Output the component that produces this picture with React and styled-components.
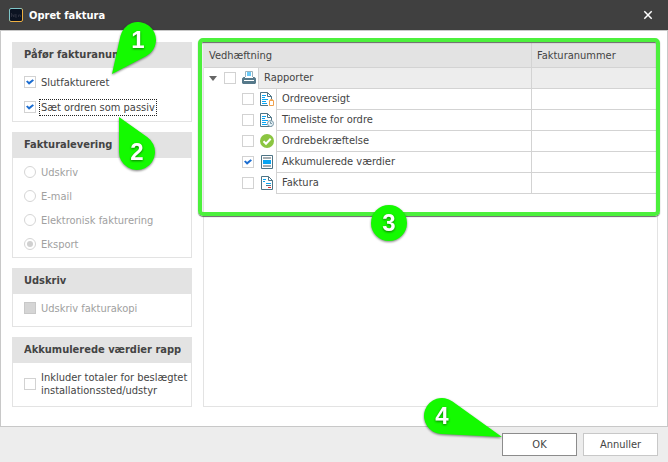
import React from 'react';
import styled, { createGlobalStyle } from 'styled-components';

const reports = [
	{ id: 'overview', name: 'Ordreoversigt', icon: 'lock' },
	{ id: 'timelist', name: 'Timeliste for ordre', icon: 'clock' },
	{ id: 'confirmation', name: 'Ordrebekræftelse', icon: 'approved' },
	{ id: 'accumulated', name: 'Akkumulerede værdier', icon: 'layout', checked: true },
	{ id: 'invoice', name: 'Faktura', icon: 'invoice' },
];

const deliveries = ['Udskriv', 'E-mail', 'Elektronisk fakturering', 'Eksport'];

const App = () => {
	return (
		<Window>
			<GlobalStyle />
			<TitleBar>
				<AppLogo />
				<WindowTitle>Opret faktura</WindowTitle>
				<CloseButton type="button" aria-label="Luk">
					<svg width="10" height="10" viewBox="0 0 10 10" aria-hidden="true">
						<path d="M1.3 1.3 8.7 8.7M8.7 1.3 1.3 8.7" stroke="#fff" strokeWidth="1.5" />
					</svg>
				</CloseButton>
			</TitleBar>
			<Content>
				<Sidebar>
					<Panel>
						<PanelTitle>Påfør fakturanummer</PanelTitle>
						<PanelBody $gap="1px">
							<Option>
								<Checkbox defaultChecked />
								<span>Slutfaktureret</span>
								<Callout number="1" left={96} top={-48} tip={[-26, 34]} />
							</Option>
							<Option>
								<Checkbox defaultChecked />
								<FocusText>Sæt ordren som passiv</FocusText>
								<Callout number="2" left={95} top={39} tip={[-18, -35]} />
							</Option>
						</PanelBody>
					</Panel>
					<Panel>
						<PanelTitle>Fakturalevering</PanelTitle>
						<PanelBody $bottom="1px">
							{deliveries.map((name) => (
								<Option key={name} $disabled>
									<Radio name="delivery" disabled defaultChecked={name === 'Eksport'} />
									<span>{name}</span>
								</Option>
							))}
						</PanelBody>
					</Panel>
					<Panel>
						<PanelTitle>Udskriv</PanelTitle>
						<PanelBody $bottom="6px">
							<Option $disabled>
								<Checkbox disabled />
								<span>Udskriv fakturakopi</span>
							</Option>
						</PanelBody>
					</Panel>
					<Panel>
						<PanelTitle>Akkumulerede værdier rapport</PanelTitle>
						<PanelBody $top="8px" $bottom="9px">
							<Option>
								<Checkbox />
								<span>Inkluder totaler for beslægtet installationssted/udstyr</span>
							</Option>
						</PanelBody>
					</Panel>
				</Sidebar>
				<Attachments>
					<Table>
						<thead>
							<tr>
								<HeadCell>Vedhæftning</HeadCell>
								<HeadCell $narrow>Fakturanummer</HeadCell>
							</tr>
						</thead>
						<tbody>
							<tr>
								<Cell>
									<TreeNode>
										<Expander type="button" aria-label="Fold sammen">
											<svg width="8" height="5" viewBox="0 0 8 5" aria-hidden="true">
												<path d="M0 0h8L4 5z" fill="#666" />
											</svg>
										</Expander>
										<Checkbox id="reports" />
										<PrinterIcon />
										<NodeLabel htmlFor="reports" $group>Rapporter</NodeLabel>
									</TreeNode>
								</Cell>
								<ValueCell $group />
							</tr>
							{reports.map((report) => (
								<tr key={report.id}>
									<Cell>
										<TreeNode $child>
											<Checkbox id={report.id} defaultChecked={report.checked} />
											<ReportIcon kind={report.icon} />
											<NodeLabel htmlFor={report.id}>{report.name}</NodeLabel>
										</TreeNode>
									</Cell>
									<ValueCell />
								</tr>
							))}
						</tbody>
					</Table>
					<Highlight>
						<Callout number="3" left={169} top={163} />
					</Highlight>
				</Attachments>
			</Content>
			<Footer>
				<ButtonSlot>
					<Button type="button" $primary>OK</Button>
					<Callout number="4" left={-78} top={-35} tip={[60, 21]} />
				</ButtonSlot>
				<Button type="button">Annuller</Button>
			</Footer>
		</Window>
	);
};

export default App;

// Callouts

const RADIUS = 18;

// Outline of the bubble: the two tangents from the tip, then the long way round the circle
const bubblePath = ([x, y]) => {
	const angle = Math.atan2(y, x);
	const spread = Math.acos(RADIUS / Math.hypot(x, y));
	const point = (a) => `${RADIUS * Math.cos(a)} ${RADIUS * Math.sin(a)}`;
	return `M${x} ${y}L${point(angle + spread)}A${RADIUS} ${RADIUS} 0 1 1 ${point(angle - spread)}Z`;
};

const Callout = ({ number, left, top, tip }) => (
	<Bubble $left={left} $top={top} viewBox="-18 -18 36 36">
		{tip ? <path d={bubblePath(tip)} fill="#14fa00" /> : <circle r={RADIUS} fill="#14fa00" />}
		<BubbleText y="8" textAnchor="middle">{number}</BubbleText>
	</Bubble>
);

// Icons

const AppLogo = () => (
	<svg width="14" height="14" viewBox="0 0 14 14" aria-hidden="true">
		<defs>
			<linearGradient id="logoEdge" x1="0" y1="0" x2="1" y2="1">
				<stop offset="0.4" stopColor="#7fc6c9" />
				<stop offset="0.6" stopColor="#f0b040" />
			</linearGradient>
		</defs>
		<rect x="0.5" y="0.5" width="13" height="13" rx="1.5" fill="#0c1322" stroke="url(#logoEdge)" />
		<path d="M2.5 5v4M2.5 7h2v2M6 7h2M6 6v3h2M9.500 9V7h2v2" stroke="#2a2e3c" fill="none" />
	</svg>
);

const PrinterIcon = () => (
	<svg width="14" height="14" viewBox="0 0 14 14" aria-hidden="true">
		<path d="M3.500 6V.500h7V6" fill="#fff" stroke="#9db3bd" />
		<path d="M5 1h4v4H5z" fill="#6bcaf8" />
		<path d="M1.500 6H3v1h8V6h1.500L14 7.500V12l-1 1H1l-1-1V7.500z" fill="#56798a" />
		<path d="M2 9.500h10" stroke="#fff" />
	</svg>
);

const ReportIcon = ({ kind }) => {
	if (kind === 'approved') {
		return (
			<svg width="14" height="14" viewBox="0 0 14 14" aria-hidden="true">
				<circle cx="7" cy="7" r="7" fill="#8bc541" />
				<path d="M3.500 7.200 6 9.700 10.700 4.800" fill="none" stroke="#fff" strokeWidth="2" />
			</svg>
		);
	}
	if (kind === 'layout') {
		return (
			<svg width="14" height="14" viewBox="0 0 14 14" aria-hidden="true">
				<path d="M1.500.5h11v13h-11z" fill="#fff" stroke="#4f7586" />
				<path d="M3 2h8v2H3zM3 10h8v2H3z" fill="#a3adb2" />
				<path d="M3 5h8v4H3z" fill="#08a4f2" />
			</svg>
		);
	}
	if (kind === 'invoice') {
		return (
			<svg width="14" height="14" viewBox="0 0 14 14" aria-hidden="true">
				<path d="M1.500.5h7l4 4v9h-11z" fill="#fff" stroke="#4f7586" />
				<path d="M8.500.5v4h4" fill="none" stroke="#4f7586" />
				<path d="M3 3.500h3M3 5.500h2M6 7.500h5" stroke="#08a4f2" />
				<path d="M6 9.500h5" stroke="#4f7586" />
				<path d="M8 11.500h3" stroke="#e8352d" />
			</svg>
		);
	}
	return (
		<svg width="14" height="14" viewBox="0 0 14 14" aria-hidden="true">
			<path d="M.5.5h7l4 4v9H.5z" fill="#fff" stroke="#4f7586" />
			<path d="M7.500.5v4h4" fill="none" stroke="#4f7586" />
			<path d="M2 3.500h4M2 5.500h3M2 7.500h6M2 9.500h4M2 11.500h5" stroke="#08a4f2" />
			{kind === 'lock' ? (
				<>
					<path d="M8 7h6v7H8z" fill="#fff" />
					<path d="M10.500 8.500v-1h2v1" fill="none" stroke="#e8a55f" />
					<path d="M9.500 8.500h4v5h-4z" fill="#fff" stroke="#f0a04b" />
				</>
			) : (
				<>
					<circle cx="10.5" cy="10.5" r="3" fill="#e5f1f6" stroke="#7997a5" />
					<path d="M10.500 8.500v2h1.500" fill="none" stroke="#7997a5" />
				</>
			)}
		</svg>
	);
};

// Styles

const GlobalStyle = createGlobalStyle`
	* {
		box-sizing: border-box;
	}
	body {
		margin: 0;
		color: #444;
		font-family: 'DejaVu Sans Condensed', 'DejaVu Sans', sans-serif;
		font-size: 11px;
		line-height: 13px;
	}
	button {
		font: inherit;
		color: inherit;
	}
`;

const Window = styled.div`
	min-height: 100vh;
	display: flex;
	flex-direction: column;
	background-color: #ededed;
`;

const TitleBar = styled.header`
	height: 30px;
	padding: 0 15px 0 9px;
	display: flex;
	align-items: center;
	gap: 6px;
	background-color: #404040;
`;

const WindowTitle = styled.h1`
	margin: 0;
	flex: 1;
	color: #fff;
	font-size: 11px;
	font-weight: bold;
`;

const CloseButton = styled.button`
	display: flex;
	padding: 0;
	border: 0;
	background: none;
`;

const Content = styled.main`
	flex: 1;
	display: flex;
	gap: 11px;
	padding: 11px 9px 19px 11px;
	border: 1px solid #c8c8c8;
	background-color: #fff;
`;

const Sidebar = styled.div`
	width: 180px;
	display: flex;
	flex-direction: column;
	gap: 10px;
`;

const Panel = styled.section`
	border: 1px solid #e3e3e3;
	border-top: 0;
`;

const PanelTitle = styled.h2`
	height: 26px;
	margin: 0;
	border: solid #e3e3e3;
	border-width: 0 10px 0 11px;
	background-color: #e3e3e3;
	font-size: 11px;
	font-weight: bold;
	line-height: 26px;
	white-space: nowrap;
	overflow: hidden;
`;

const PanelBody = styled.div`
	display: flex;
	flex-direction: column;
	gap: ${(props) => props.$gap || '0'};
	padding: ${(props) => props.$top || '2px'} 0 ${(props) => props.$bottom || '2px'} 11px;
`;

const Option = styled.label`
	position: relative;
	min-height: 24px;
	display: flex;
	align-items: center;
	gap: 5px;
	color: ${(props) => (props.$disabled ? '#a0a0a0' : '#444')};
`;

const FocusText = styled.span`
	outline: 1px dotted #222;
	outline-offset: 1px;
`;

const Checkbox = styled.input.attrs({ type: 'checkbox' })`
	appearance: none;
	flex: none;
	width: 12px;
	height: 12px;
	margin: 0;
	border: 1px solid #d2d2d2;
	background-color: #fff;
	&:disabled {
		border-color: #c8c8c8;
		background-color: #d5d5d5;
	}
	&:checked::before {
		content: '';
		display: block;
		width: 8px;
		height: 6px;
		margin: 2px 1px;
		background-color: #1c6dd0;
		clip-path: polygon(0 40%, 20% 25%, 38% 52%, 82% 5%, 100% 25%, 38% 95%);
	}
`;

const Radio = styled.input.attrs({ type: 'radio' })`
	appearance: none;
	flex: none;
	width: 12px;
	height: 12px;
	margin: 0;
	padding: 2px;
	border: 1px solid #d5d5d5;
	border-radius: 50%;
	background-color: #fff;
	&:checked {
		background: #d0d0d0 content-box;
	}
`;

const Attachments = styled.section`
	position: relative;
	flex: 1;
	border: 1px solid #e3e3e3;
`;

const Table = styled.table`
	width: 100%;
	border-spacing: 0;
	table-layout: fixed;
`;

const HeadCell = styled.th`
	width: ${(props) => (props.$narrow ? '126px' : 'auto')};
	height: 25px;
	padding: 0 5px;
	border-bottom: 1px solid #d3d3d3;
	border-left: ${(props) => (props.$narrow ? '1px solid #d3d3d3' : '0')};
	background-color: #e3e3e3;
	font-weight: normal;
	text-align: left;
`;

const Cell = styled.td`
	height: 21px;
	padding: 0;
`;

const ValueCell = styled.td`
	border: solid #d3d3d3;
	border-width: 0 0 1px 1px;
	background-color: ${(props) => (props.$group ? '#ededed' : '#fff')};
`;

const TreeNode = styled.div`
	height: 21px;
	display: flex;
	align-items: center;
	gap: 6px;
	padding-left: ${(props) => (props.$child ? '38px' : '5px')};
	padding-bottom: 1px;
`;

const Expander = styled.button`
	display: flex;
	width: 9px;
	padding: 0;
	border: 0;
	background: none;
`;

const NodeLabel = styled.label`
	flex: 1;
	align-self: stretch;
	margin: 0 0 -1px -4px;
	padding-left: 5px;
	border: solid #d3d3d3;
	border-width: 0 0 1px 1px;
	background-color: ${(props) => (props.$group ? '#ededed' : '#fff')};
	line-height: 20px;
`;

const Highlight = styled.div`
	position: absolute;
	top: -5px;
	left: -6px;
	right: -3px;
	height: 178px;
	border: 4px solid #4cf03c;
	border-radius: 5px;
	box-shadow: 0 1px 1px #666, inset 0 1px 1px #666;
	pointer-events: none;
`;

const Bubble = styled.svg`
	position: absolute;
	z-index: 1;
	left: ${(props) => props.$left}px;
	top: ${(props) => props.$top}px;
	width: 36px;
	height: 36px;
	overflow: visible;
	pointer-events: none;
	filter: drop-shadow(0 1px 1px rgba(0, 0, 0, 0.5));
`;

const BubbleText = styled.text`
	fill: #fff;
	font-family: 'Liberation Sans', sans-serif;
	font-size: 24px;
	font-weight: bold;
	filter: drop-shadow(0 1px 1px rgba(0, 0, 0, 0.5));
`;

const Footer = styled.footer`
	display: flex;
	justify-content: flex-end;
	gap: 6px;
	padding: 6px 10px 6px;
`;

const ButtonSlot = styled.div`
	position: relative;
`;

const Button = styled.button`
	width: 75px;
	height: 23px;
	padding: 0;
	border: 1px solid ${(props) => (props.$primary ? '#8c8c8c' : '#c8c8c8')};
	background-color: #fff;
`;
